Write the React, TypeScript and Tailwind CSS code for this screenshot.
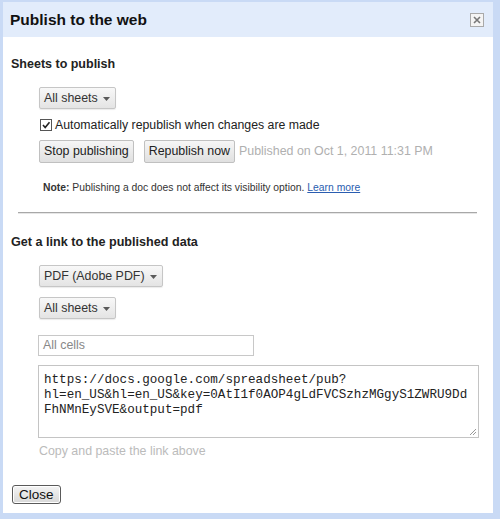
import React from "react";

const Arrow = () => (
  <svg width="7" height="4" viewBox="0 0 7 4" className="ml-[5px] mt-[1px]">
    <path d="M0 0 H7 L3.5 4 Z" fill="#5a5a5a" />
  </svg>
);

const Dropdown = ({ label }: { label: string }) => (
  <div className="flex items-center h-[22px] pl-[4px] pr-[5px] border border-[#c6c6c6] rounded-[2px] bg-gradient-to-b from-[#f8f8f8] to-[#e4e4e4] text-[12.4px] leading-none text-[#333] shadow-[0_1px_1px_rgba(0,0,0,0.08)]">
    <span>{label}</span>
    <Arrow />
  </div>
);

const Btn = ({ label }: { label: string }) => (
  <div className="flex items-center h-[23px] px-[4px] border border-[#c0c0c0] rounded-[2px] bg-gradient-to-b from-[#f6f6f6] to-[#e0e0e0] text-[12.4px] leading-none text-[#222]">
    {label}
  </div>
);

export default function App() {
  return (
    <div
      className="w-[500px] h-[519px] bg-[#c9daf5] pt-[2px] pl-[3px] pr-[8px] pb-[6px] flex"
      style={{ fontFamily: '"Liberation Sans", Arial, sans-serif' }}
    >
      <div className="flex-1 bg-white flex flex-col">
        <div className="h-[35px] shrink-0 bg-[#e2ecfb] flex items-center justify-between pl-[7px] pr-[9px]">
          <span className="text-[15.5px] font-bold text-[#111] leading-none">Publish to the web</span>
          <div className="w-[14px] h-[14px] border border-[#a9a9a9] bg-[#f4f4f4] flex items-center justify-center">
            <svg width="8" height="8" viewBox="0 0 8 8">
              <path d="M1 1 L7 7 M7 1 L1 7" stroke="#777" strokeWidth="1.6" />
            </svg>
          </div>
        </div>

        <div className="flex-1 flex flex-col pl-[8px] pr-[14px]">
          <div className="mt-[20px] h-[14px] text-[12.5px] font-bold text-[#222] leading-[14px]">Sheets to publish</div>

          <div className="pl-[28px] flex flex-col items-start">
            <div className="mt-[16px] flex">
              <Dropdown label="All sheets" />
            </div>
            <div className="mt-[8px] flex items-center h-[16px]">
              <div className="w-[12px] h-[12px] border border-[#555] bg-white flex items-center justify-center ml-[1px]">
                <svg width="10" height="10" viewBox="0 0 10 10">
                  <path d="M2 5 L4.2 7.5 L8.5 2.2" stroke="#222" strokeWidth="1.6" fill="none" />
                </svg>
              </div>
              <span className="ml-[3px] text-[12.3px] leading-none text-[#222]">Automatically republish when changes are made</span>
            </div>
            <div className="mt-[7px] flex items-center">
              <Btn label="Stop publishing" />
              <div className="ml-[10px] flex">
                <Btn label="Republish now" />
              </div>
              <span className="ml-[4px] text-[12.4px] leading-none text-[#b0b0b0]">Published on Oct 1, 2011 11:31 PM</span>
            </div>
            <div className="mt-[19px] h-[12px] ml-[4px] text-[10.35px] text-[#333] leading-[12px] whitespace-nowrap">
              <span className="font-bold">Note:</span> Publishing a doc does not affect its visibility option.{" "}
              <span className="text-[#2a5db0] underline">Learn more</span>
            </div>
          </div>

          <div className="mt-[18px] ml-[7px] mr-[2px] h-[2px] border-t border-[#a8a8a8] border-b-[#e6e6e6] border-b" />

          <div className="mt-[21px] h-[14px] text-[12.6px] font-bold text-[#222] leading-[14px]">Get a link to the published data</div>

          <div className="pl-[28px] flex flex-col items-start">
            <div className="mt-[16px] flex">
              <Dropdown label="PDF (Adobe PDF)" />
            </div>
            <div className="mt-[10px] flex">
              <Dropdown label="All sheets" />
            </div>
            <div className="mt-[16px] -ml-[1px] w-[216px] h-[21px] border border-[#c8c8c8] flex items-center px-[4px] text-[12.4px] leading-none text-[#888]">
              All cells
            </div>
            <div className="mt-[9px] -ml-[1px] w-[441px] h-[73px] border border-[#c4c4c4] relative pl-[5px] pt-[7px]">
              <div
                className="text-[12.6px] leading-[15px] text-[#222] whitespace-pre"
                style={{ fontFamily: '"Liberation Mono", "Courier New", monospace' }}
              >
                {"https://docs.google.com/spreadsheet/pub?\nhl=en_US&hl=en_US&key=0AtI1f0AOP4gLdFVCSzhzMGgyS1ZWRU9Dd\nFhNMnEySVE&output=pdf"}
              </div>
              <svg width="8" height="8" viewBox="0 0 8 8" className="absolute right-[1px] bottom-[1px]">
                <path d="M7 1 L1 7 M7 4 L4 7" stroke="#999" strokeWidth="1" />
              </svg>
            </div>
            <div className="mt-[6px] h-[14px] text-[12.4px] text-[#bbb] leading-[14px]">Copy and paste the link above</div>
          </div>

          <div className="mt-[27px] ml-[1px] flex">
            <div className="flex items-center h-[19px] px-[6px] border border-[#5a5a5a] rounded-[3px] bg-gradient-to-b from-[#f4f4f4] to-[#d8d8d8] text-[13.5px] leading-none text-[#111] shadow-[inset_0_0_0_1px_#fff]">
              Close
            </div>
          </div>
        </div>
      </div>
    </div>
  );
}
